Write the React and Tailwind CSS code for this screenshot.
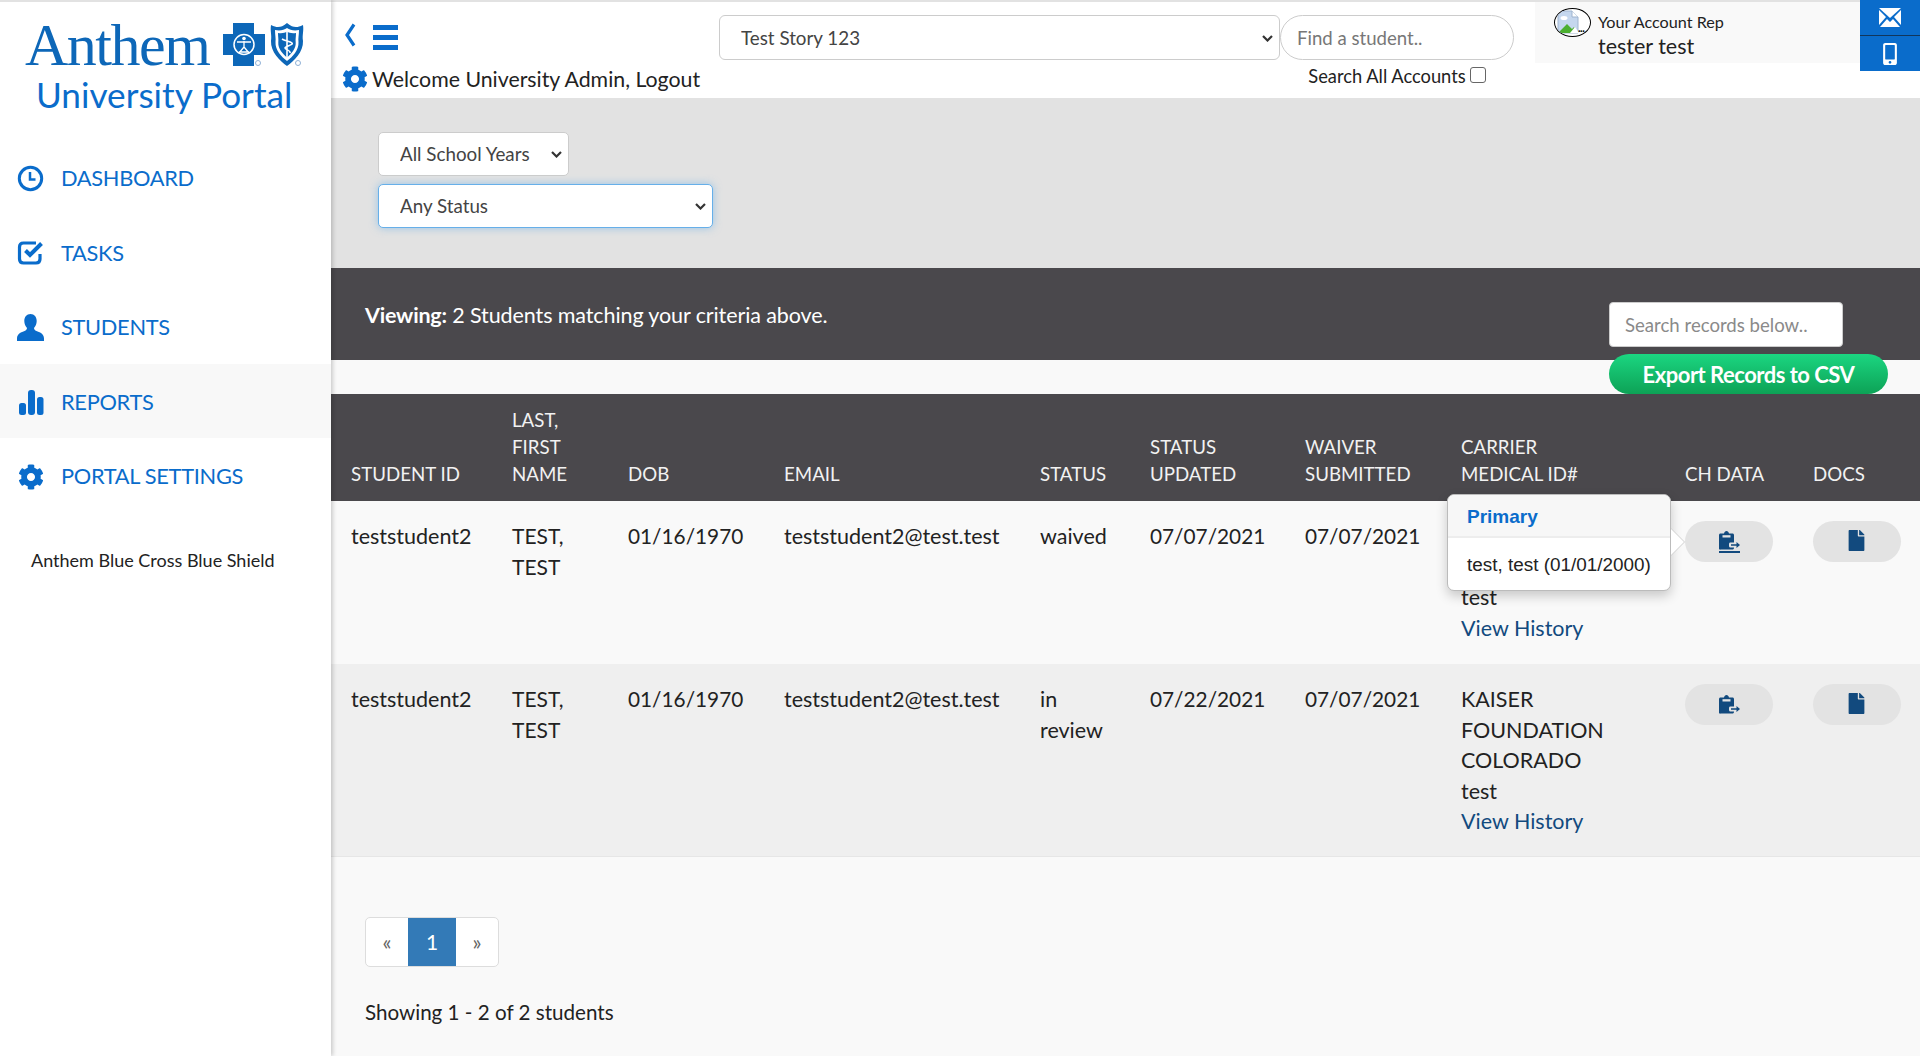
import React from "react";
import { FaCog, FaMobileAlt, FaFile } from "react-icons/fa";

const lato = { fontFamily: "Lato, 'Open Sans', sans-serif" };
const arial = { fontFamily: "'Liberation Sans', sans-serif" };

function Logo() {
  return (
    <div className="flex flex-col items-start pl-[25px] pt-[20px]">
      <div className="flex items-start h-[48px]">
        <span className="w-[193px] text-[#0d67b8] text-[60px] leading-[46px] tracking-[-1.5px] h-[46px] whitespace-nowrap" style={{ fontFamily: "'Liberation Serif', serif" }}>Anthem</span>
        <svg width="90" height="48" viewBox="0 0 90 48" className="shrink-0">
          <path d="M15 1h21v11h11v21H36v11H15V33H5V12h10z" fill="#0d67b8" />
          <circle cx="26" cy="22.500" r="10" fill="none" stroke="#fff" strokeWidth="1.500" />
          <circle cx="26" cy="16.500" r="1.800" fill="#fff" />
          <path d="M19 20h14M26 19v6M26 25l-5 6M26 25l5 6M21 30h10" stroke="#fff" strokeWidth="1.300" fill="none" />
          <path d="M53 3c3 1.500 5 2 7 2 3 0 5-1 9-4 4 3 6 4 9 4 2 0 4-.5 7-2 1 6-1 10 0 16 .5 11-9 20-16 25-7-5-16.500-14-16-25 1-6-1-10 0-16z" fill="#0d67b8" />
          <path d="M57 8c5 1 9 0 12-2 3 2 7 3 12 2 0 5-1 8-.5 12 .5 8-6 15-11.500 19-5.500-4-12-11-11.500-19 .5-4-.5-7-.5-12z" fill="#fff" />
          <path d="M60 11c4 .5 7 0 9-1.500 2 1.500 5 2 9 1.500 0 4-.7 6-.3 9.500 .4 6-4 11-8.700 15-4.700-4-9.100-9-8.700-15 .4-3.500-.3-5.500-.3-9.500z" fill="#0d67b8" />
          <path d="M69 8v28M64 17c3 2 8 2 10 4s-7 3-7 5 6 2 5 5" stroke="#fff" strokeWidth="1.600" fill="none" />
          <circle cx="40" cy="41" r="2.500" fill="none" stroke="#8fb1d6" strokeWidth="1" />
          <circle cx="80" cy="41" r="2.500" fill="none" stroke="#8fb1d6" strokeWidth="1" />
        </svg>
      </div>
      <div className="text-[#0a6ccb] text-[35.200px] leading-[42px] ml-[11px] mt-[3px] whitespace-nowrap">University Portal</div>
    </div>
  );
}

function ClockIcon() {
  return (
    <svg width="27" height="27" viewBox="0 0 27 27" fill="none" stroke="currentColor" strokeWidth="3">
      <circle cx="13.500" cy="13.500" r="11.200" />
      <path d="M13 7v7.500h5.500" strokeWidth="2.500" />
    </svg>
  );
}

function TasksIcon() {
  return (
    <svg width="27" height="27" viewBox="0 0 27 27" fill="none" stroke="currentColor">
      <path d="M19 4H6.500C4 4 2.500 5.500 2.500 8v12c0 2.500 1.500 4 4 4H19c2.500 0 4-1.500 4-4v-5" strokeWidth="3.200" />
      <path d="M8.500 11.500l4.500 4.500L24.500 4.500" strokeWidth="4" />
    </svg>
  );
}

function StudentIcon() {
  return (
    <svg width="27" height="27" viewBox="0 0 27 27" fill="currentColor">
      <path d="M13.500 0c3.900 0 6.200 3 6.200 7 0 3-1.200 5.300-2.700 7 .1 1.500 .9 2.300 2.400 3 3.100 1.300 7.600 2.500 7.600 7.500V27H0v-2.500c0-5 4.500-6.200 7.600-7.500 1.500-.7 2.300-1.500 2.400-3-1.500-1.700-2.700-4-2.700-7 0-4 2.300-7 6.200-7z" />
    </svg>
  );
}

function BarsIcon() {
  return (
    <svg width="27" height="27" viewBox="0 0 27 27" fill="currentColor">
      <rect x="2" y="14" width="7" height="12" rx="2.500" />
      <rect x="11" y="1" width="7" height="25" rx="3" />
      <rect x="20" y="8" width="6.500" height="18" rx="2.500" />
    </svg>
  );
}

function Nav({ icon, label, active }) {
  return (
    <div className={`flex items-center h-[74.600px] pl-[17px] pt-[2px] text-[#0a6ccb] ${active ? "bg-[#f8f8f8]" : ""}`}>
      <span className="w-[27px] h-[27px] flex items-center justify-center text-[26px]">{icon}</span>
      <span className="ml-[17px] text-[21.800px] tracking-[-0.3px] whitespace-nowrap">{label}</span>
    </div>
  );
}

function Sidebar() {
  return (
    <aside className="w-[331px] shrink-0 h-full bg-white shadow-[2px_0_4px_rgba(0,0,0,0.18)] relative z-10 border-t-2 border-[#e2e2e2]">
      <div className="h-[138px]"><Logo /></div>
      <Nav icon={<ClockIcon />} label="DASHBOARD" />
      <Nav icon={<TasksIcon />} label="TASKS" />
      <Nav icon={<StudentIcon />} label="STUDENTS" />
      <Nav icon={<BarsIcon />} label="REPORTS" active />
      <Nav icon={<FaCog />} label="PORTAL SETTINGS" />
      <div className="pl-[31px] mt-[34px] text-[18px] leading-[26px] text-[#222] whitespace-nowrap">Anthem Blue Cross Blue Shield</div>
    </aside>
  );
}

function BrokenImage() {
  return (
    <div className="w-[37px] h-[29px] rounded-[50%] border border-black overflow-hidden bg-white shrink-0 flex items-center pl-[1px]">
      <svg width="28" height="27" viewBox="0 0 28 27">
        <path d="M2 2h14l6 6v16H2z" fill="#c5d7ee" stroke="#9fb4cf" strokeWidth="1" />
        <path d="M16 2v6h6" fill="#fff" stroke="#9fb4cf" strokeWidth="1" />
        <ellipse cx="8" cy="9" rx="3.500" ry="2" fill="#fff" />
        <path d="M2 24l9-9 5 5 2-2 4 6z" fill="#4caf2f" />
        <path d="M14 24l5-6 4 6z" fill="#fff" />
      </svg>
      <span className="text-[11px] leading-none font-bold -ml-[6px] mt-[10px] tracking-[-0.5px]">...</span>
    </div>
  );
}

function Chevron() {
  return (
    <svg width="11" height="7" viewBox="0 0 11 7" className="absolute right-[7px] top-1/2 -mt-[3px] pointer-events-none">
      <path d="M1 1l4.500 4.500L10 1" fill="none" stroke="#333" strokeWidth="2.200" />
    </svg>
  );
}

function Select({ label, className, sel }) {
  return (
    <div className={`relative shrink-0 ${className}`}>
      <select defaultValue="a" className={`appearance-none block w-full h-full bg-white rounded-[5px] pl-[21px] text-[#444] ${sel}`} style={lato}>
        <option value="a">{label}</option>
      </select>
      <Chevron />
    </div>
  );
}

function Header() {
  return (
    <header className="h-[98px] bg-white flex shrink-0 border-t-2 border-[#e2e2e2]">
      <div className="w-[388px] shrink-0 pl-[11px]">
        <div className="flex items-center h-[60px] text-[#0a6ccb] pt-[11px]">
          <svg width="12" height="24" viewBox="0 0 12 24" className="ml-[2px] -mt-[5px]"><path d="M10 1.500L3 12l7 10.500" fill="none" stroke="currentColor" strokeWidth="3.200" /></svg>
          <span className="ml-[17px] flex flex-col gap-[5px]">
            <i className="block w-[25px] h-[5px] bg-[#0a6ccb]" />
            <i className="block w-[25px] h-[5px] bg-[#0a6ccb]" />
            <i className="block w-[25px] h-[5px] bg-[#0a6ccb]" />
          </span>
        </div>
        <div className="flex items-center mt-[4px]">
          <FaCog className="text-[#0a6ccb] text-[26px] shrink-0" />
          <span className="ml-[4px] text-[21.300px] leading-[26px] text-[#222] whitespace-nowrap">Welcome University Admin, Logout</span>
        </div>
      </div>
      <Select label="Test Story 123" className="mt-[13px] h-[45px] w-[561px]" sel="border border-[#cccccc] text-[18.800px] rounded-[6px] pt-[1px]" />
      <div className="w-[234px] shrink-0 mt-[13px]">
        <input placeholder="Find a student.." className="h-[45px] w-full border border-[#cccccc] rounded-full bg-white pl-[16px] text-[18.600px] placeholder:text-[#777] outline-none" />
        <div className="flex items-center justify-center mt-[3px] text-[18.300px] leading-[26px] text-[#222] w-[234px] whitespace-nowrap">
          Search All Accounts
          <input type="checkbox" className="appearance-none ml-[4px] w-[16px] h-[16px] -mt-[3px] bg-white border border-[#666] rounded-[3px]" />
        </div>
      </div>
      <div className="w-[325px] h-[61px] ml-[21px] bg-[#f9f9f9] flex pl-[19px] pt-[6px] shrink-0">
        <BrokenImage />
        <div className="ml-[7px]">
          <div className="text-[16.200px] leading-[19px] text-[#222] mt-[4px]">Your Account Rep</div>
          <div className="text-[21.500px] leading-[26px] text-[#222] mt-[2px]">tester test</div>
        </div>
      </div>
      <div className="w-[60px] shrink-0 -mt-[2px] h-[71px] flex flex-col">
        <div className="h-[36px] bg-[#0a6ccb] flex items-center justify-center border-b border-[#11365c]">
          <svg width="22" height="19" viewBox="0 0 22 19"><path d="M0 0h22L11 10z" fill="#fff" /><path d="M0 2l7 7-7 8zM22 2l-7 7 7 8z" fill="#fff" /><path d="M1 19l7-8 3 3 3-3 7 8z" fill="#fff" /></svg>
        </div>
        <div className="flex-1 bg-[#0a6ccb] flex items-center justify-center">
          <FaMobileAlt className="text-white text-[22px]" />
        </div>
      </div>
    </header>
  );
}

const cols = "grid grid-cols-[161px_116px_156px_256px_110px_155px_156px_224px_128px_1fr]";

function ClipIcon({ underline }) {
  return (
    <span className={`inline-flex ${underline ? "border-b-2 border-[#124a7e] pb-[1px]" : ""}`}>
      <svg width="21" height="19" viewBox="0 0 21 19" fill="#124a7e" className="block">
        <path d="M1.500 2.500h3.500C5.300 1 6.300 0 7.500 0S9.700 1 10 2.500h3.500c.8 0 1.500.7 1.500 1.500v7.500h-3.500c-1 0-1.500.6-1.500 1.500v2c0 .9.6 1.500 1.500 1.500H15v.5c0 .8-.7 1.500-1.500 1.500h-12C.7 19 0 18.300 0 17.500V4c0-.8.7-1.500 1.500-1.500z" />
        <path d="M3.500 4.200h8V6.500h-8z" fill="#e3e3e3" />
        <path d="M12 13.200h5.500V11l3.500 3-3.500 3v-2.200H12z" />
      </svg>
    </span>
  );
}

function Row({ bg, status, updated, carrier, h, underline }) {
  return (
    <div className={`${cols} ${bg} text-[21.500px] leading-[30.500px] text-[#222] relative shrink-0`} style={{ height: h }}>
      <div className="pl-5 pt-5">teststudent2</div>
      <div className="pl-5 pt-5 text-[21px]">TEST,<br />TEST</div>
      <div className="pl-5 pt-5 text-[20.800px]">01/16/1970</div>
      <div className="pl-5 pt-5">teststudent2@test.test</div>
      <div className="pl-5 pt-5 pr-5">{status}</div>
      <div className="pl-5 pt-5 text-[20.800px]">{updated}</div>
      <div className="pl-5 pt-5 text-[20.800px]">07/07/2021</div>
      <div className="pl-5 pt-5">
        {carrier ? <div className="w-[170px]">{carrier}</div> : <div className="h-[61px]" />}
        <div>test</div>
        <a className="text-[#124a7e]">View History</a>
      </div>
      <div className="pl-5 pt-5">
        <div className="w-[88px] h-[41px] rounded-full bg-[#e3e3e3] flex items-center justify-center"><ClipIcon underline={underline} /></div>
      </div>
      <div className="pl-5 pt-5">
        <div className="w-[88px] h-[41px] rounded-full bg-[#e3e3e3] flex items-center justify-center">
          <FaFile className="text-[#124a7e] text-[21px] -ml-[1px] -mt-[3px]" />
        </div>
      </div>
    </div>
  );
}

function Popover() {
  return (
    <div className="absolute left-[1116px] top-[494px] w-[224px] h-[97px] bg-white border border-[#bbbbbb] rounded-[7px] shadow-[0_5px_12px_rgba(0,0,0,0.2)] z-20">
      <div className="h-[43px] bg-[#f7f7f7] border-b-2 border-[#ededed] rounded-t-[7px] flex items-center pl-[19px] pt-[4px] text-[#0a6ccb] text-[19px] font-bold" style={arial}>Primary</div>
      <div className="pl-[19px] pt-[15px] text-[18.900px] text-[#222] leading-[24px] whitespace-nowrap" style={arial}>test, test (01/01/2000)</div>
      <div className="absolute -right-[15px] top-[33px] w-0 h-0 border-y-[14px] border-y-transparent border-l-[14px] border-l-[#cfcfcf]" />
      <div className="absolute -right-[14px] top-[34px] w-0 h-0 border-y-[13px] border-y-transparent border-l-[13px] border-l-white" />
    </div>
  );
}

export default function App() {
  return (
    <div className="flex h-screen w-full overflow-hidden bg-[#f9f9f9]" style={lato}>
      <Sidebar />
      <main className="flex-1 min-w-0 flex flex-col relative">
        <Header />
        <section className="h-[170px] bg-[#e2e2e2] pl-[47px] pt-[34px] shrink-0">
          <Select label="All School Years" className="h-[44px] w-[191px]" sel="border border-[#cccccc] text-[18.800px]" />
          <Select label="Any Status" className="mt-[8px] h-[44px] w-[335px]" sel="border border-[#66afe9] text-[18.800px] shadow-[0_0_8px_rgba(102,175,233,0.6)]" />
        </section>
        <section className="h-[92px] bg-[#4a484c] flex shrink-0 relative">
          <div className="pl-[34px] pt-[33px] text-white text-[21.500px] leading-[28px] tracking-[-0.1px]">
            <b className="font-bold tracking-[-0.2px]">Viewing:</b> 2 Students matching your criteria above.
          </div>
          <input placeholder="Search records below.." className="absolute left-[1278px] top-[34px] h-[45px] w-[234px] bg-white rounded-[4px] border border-[#cccccc] pl-[15px] text-[18.600px] placeholder:text-[#8a8a8a] outline-none" />
        </section>
        <div className="h-[34px] shrink-0 bg-[#f9f9f9] relative">
          <div className="absolute left-[1278px] -top-[6px] w-[279px] h-[40px] rounded-full bg-gradient-to-b from-[#1bd681] to-[#0da256] text-white text-[22px] font-bold flex items-center justify-center tracking-[-0.5px] z-10">Export Records to CSV</div>
        </div>
        <div className={`${cols} h-[107px] shrink-0 bg-[#4a484c] text-[#f2f2f2] text-[18.700px] leading-[27px] items-end pb-[13px]`}>
          <div className="pl-5">STUDENT ID</div>
          <div className="pl-5">LAST,<br />FIRST<br />NAME</div>
          <div className="pl-5">DOB</div>
          <div className="pl-5">EMAIL</div>
          <div className="pl-5">STATUS</div>
          <div className="pl-5">STATUS<br />UPDATED</div>
          <div className="pl-5">WAIVER<br />SUBMITTED</div>
          <div className="pl-5">CARRIER<br />MEDICAL ID#</div>
          <div className="pl-5">CH DATA</div>
          <div className="pl-5">DOCS</div>
        </div>
        <Row bg="bg-[#f9f9f9]" status="waived" updated="07/07/2021" h={163} underline />
        <Row bg="bg-[#efefef] border-b border-[#e6e6e6]" status="in review" updated="07/22/2021" carrier="KAISER FOUNDATION COLORADO" h={193} />
        <Popover />
        <div className="pl-[34px] pt-[60px]">
          <div className="inline-flex h-[50px] border border-[#dddddd] rounded-[5px] bg-white text-[#666] overflow-hidden">
            <span className="w-[42px] flex items-center justify-center text-[21px]">«</span>
            <span className="w-[48px] bg-[#337ab7] text-white flex items-center justify-center text-[21px]">1</span>
            <span className="w-[42px] flex items-center justify-center text-[21px]">»</span>
          </div>
          <div className="mt-[31px] text-[20.600px] leading-[28px] text-[#222]">Showing 1 - 2 of 2 students</div>
        </div>
      </main>
    </div>
  );
}
